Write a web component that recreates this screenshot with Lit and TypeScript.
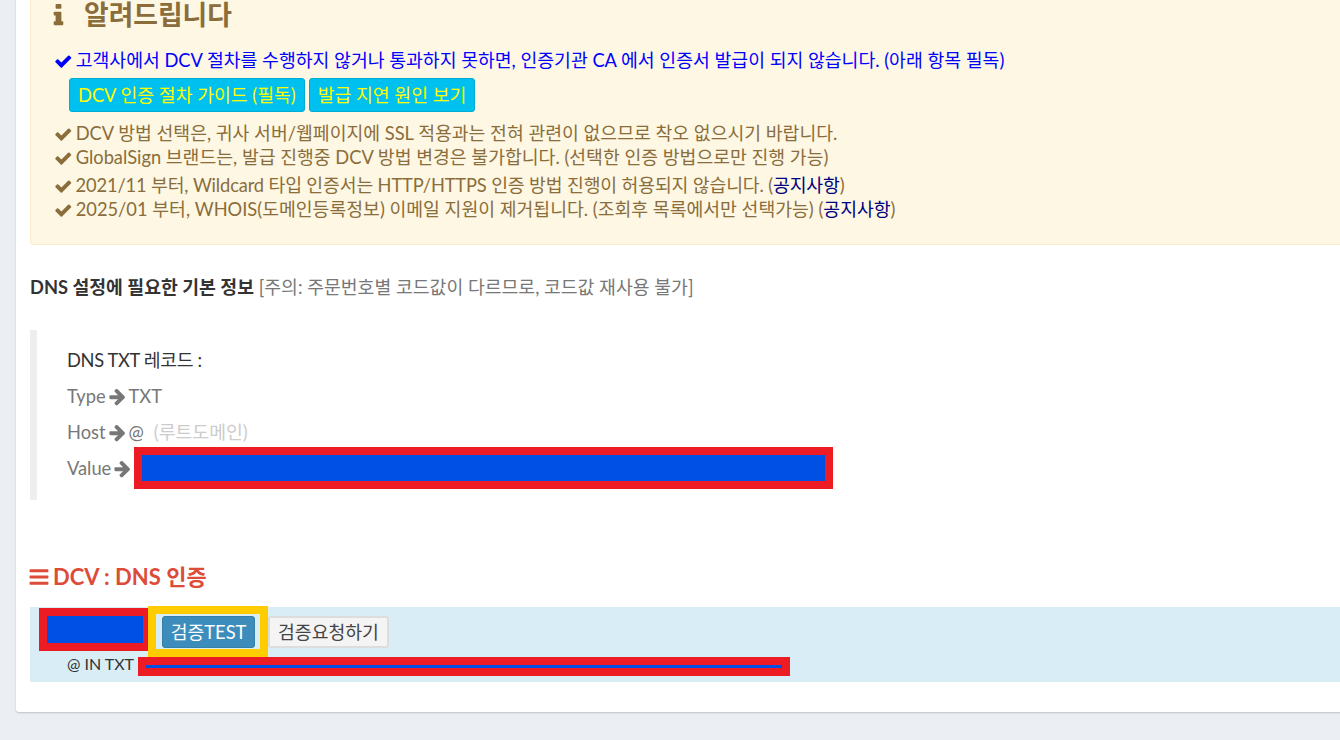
import { LitElement, html, css, svg } from "lit";
import { customElement } from "lit/decorators.js";

const CHECK = svg`<path d="M1671 566q0 40-28 68l-724 724-136 136q-28 28-68 28t-68-28l-136-136-362-362q-28-28-28-68t28-68l136-136q28-28 68-28t68 28l294 295 656-657q28-28 68-28t68 28l136 136q28 28 28 68z"/>`;
const INFO = svg`<path d="M1216 1344v128q0 26-19 45t-45 19h-512q-26 0-45-19t-19-45v-128q0-26 19-45t45-19h64v-384h-64q-26 0-45-19t-19-45v-128q0-26 19-45t45-19h384q26 0 45 19t19 45v576h64q26 0 45 19t19 45zm-128-1152v192q0 26-19 45t-45 19h-256q-26 0-45-19t-19-45v-192q0-26 19-45t45-19h256q26 0 45 19t19 45z"/>`;
const ARROW = svg`<path d="M1600 960q0 54-37 91l-651 651q-39 37-91 37-51 0-90-37l-75-75q-38-38-38-91t38-91l293-293h-704q-52 0-84.500-37.500t-32.500-90.500v-128q0-53 32.500-90.500t84.500-37.500h704l-293-294q-38-36-38-90t38-90l75-75q38-38 90-38 53 0 91 38l651 651q37 35 37 90z"/>`;
const BARS = svg`<path d="M1664 1344v128q0 26-19 45t-45 19h-1408q-26 0-45-19t-19-45v-128q0-26 19-45t45-19h1408q26 0 45 19t19 45zm0-512v128q0 26-19 45t-45 19h-1408q-26 0-45-19t-19-45v-128q0-26 19-45t45-19h1408q26 0 45 19t19 45zm0-512v128q0 26-19 45t-45 19h-1408q-26 0-45-19t-19-45v-128q0-26 19-45t45-19h1408q26 0 45 19t19 45z"/>`;

const icon = (p: unknown) =>
  html`<svg class="ico" viewBox="0 0 1792 1792" fill="currentColor" aria-hidden="true">${p}</svg>`;

@customElement("app-root")
export class AppRoot extends LitElement {
  static styles = css`
    :host {
      display: block;
      height: 740px;
      overflow: hidden;
      background: #ebeff4;
      font-family: Lato, "Noto Sans CJK KR", sans-serif;
      font-size: 18.3px;
      line-height: 24px;
      color: #333;
    }
    .card {
      margin: -20px -40px 0 16px;
      height: 732px;
      box-sizing: border-box;
      padding: 0 0 0 14px;
      background: #fff;
      border-radius: 3px;
      box-shadow: 0 1px 2px rgba(0, 0, 0, 0.2);
    }
    .ico {
      width: 18.5px;
      height: 18.5px;
      margin-right: -1.5px;
      flex: none;
      vertical-align: -3px;
    }
    .callout {
      height: 265px;
      box-sizing: border-box;
      padding: 15px 0 0 23px;
      background: #fdf7e3;
      border: 1px solid #faebcc;
      border-radius: 3px;
      color: #8a6d3b;
      white-space: nowrap;
    }
    .callout h4 {
      margin: 0 0 14px;
      font-size: 26.8px;
      line-height: 38px;
      font-weight: 700;
      display: flex;
      align-items: center;
    }
    .callout h4 .ico {
      width: 27px;
      height: 27px;
      margin: 0 11.6px 0 -8.6px;
    }
    .line {
      height: 24px;
    }
    .line.tall {
      height: 28px;
    }
    .line.tight {
      letter-spacing: -0.14px;
    }
    .blue {
      color: #0000ff;
    }
    .navy {
      color: #000080;
    }
    .guide {
      display: flex;
      gap: 4px;
      margin: 6px 0 9px 15px;
    }
    .guide span {
      height: 34px;
      box-sizing: border-box;
      padding: 0 8px;
      display: flex;
      align-items: center;
      background: #00c0ef;
      border: 1px solid #00acd6;
      border-radius: 3px;
      color: #ffff00;
    }
    .dns-title {
      margin: 30px 0 0;
      white-space: nowrap;
    }
    .dns-title b {
      color: #333;
    }
    .dns-title span {
      color: #777;
    }
    .quote {
      margin-top: 31px;
      height: 170px;
      box-sizing: border-box;
      border-left: 7px solid #eee;
      padding: 11px 0 0 30px;
      color: #777;
    }
    .row {
      height: 36px;
      display: flex;
      align-items: center;
      white-space: pre;
    }
    .row.head {
      height: 37px;
      color: #333;
      letter-spacing: -0.35px;
    }
    .row .ico {
      width: 19px;
      height: 19px;
      margin: 0 2px 0 2px;
    }
    .pale {
      color: #ccc;
      margin-left: 10px;
    }
    .mask {
      box-sizing: border-box;
      background: #0050e6;
      border: 8px solid #ed1c24;
      flex: none;
    }
    .mask.value {
      width: 699px;
      height: 42px;
    }
    .section {
      margin: 62px 0 15px;
      font-size: 22px;
      line-height: 30px;
      font-weight: 700;
      color: #dd4b39;
      display: flex;
      align-items: center;
    }
    .section .ico {
      width: 22px;
      height: 22px;
      margin: 0 3px 0 -2px;
    }
    .verify {
      height: 75px;
      background: #d9edf7;
      box-sizing: border-box;
      padding: 1px 0 0 9px;
    }
    .top {
      display: flex;
      height: 49px;
    }
    .mask.order {
      width: 112px;
      height: 43px;
      margin-right: -3px;
    }
    .outline {
      box-sizing: border-box;
      width: 120px;
      height: 51px;
      margin-top: -2px;
      border: 8px solid #ffcc00;
      padding: 2px 0 0 6px;
      position: relative;
    }
    .btn {
      box-sizing: border-box;
      height: 32px;
      display: flex;
      align-items: center;
      justify-content: center;
      border-radius: 3px;
      border: 1px solid;
    }
    .btn.test {
      width: 93px;
      background: #3c8dbc;
      border-color: #367fa9;
      color: #fff;
    }
    .btn.req {
      width: 121px;
      margin-top: 8px;
      background: #f4f4f4;
      border: 2px solid #ddd;
      color: #444;
    }
    .bottom {
      display: flex;
      height: 19px;
      padding-left: 28px;
      font-size: 16px;
      line-height: 14px;
    }
    .mask.txt {
      width: 652px;
      height: 19px;
      margin-left: 4px;
    }
  `;

  protected render() {
    return html`
      <div class="card">
        <div class="callout">
          <h4>${icon(INFO)}알려드립니다</h4>
          <div class="line blue">
            ${icon(CHECK)} 고객사에서 DCV 절차를 수행하지 않거나 통과하지 못하면, 인증기관 CA 에서 인증서 발급이 되지 않습니다. (아래 항목 필독)
          </div>
          <div class="guide">
            <span>DCV 인증 절차 가이드 (필독)</span>
            <span>발급 지연 원인 보기</span>
          </div>
          <div class="line">${icon(CHECK)} DCV 방법 선택은, 귀사 서버/웹페이지에 SSL 적용과는 전혀 관련이 없으므로 착오 없으시기 바랍니다.</div>
          <div class="line tall">${icon(CHECK)} GlobalSign 브랜드는, 발급 진행중 DCV 방법 변경은 불가합니다. (선택한 인증 방법으로만 진행 가능)</div>
          <div class="line tight">${icon(CHECK)} 2021/11 부터, Wildcard 타입 인증서는 HTTP/HTTPS 인증 방법 진행이 허용되지 않습니다. (<span class="navy">공지사항</span>)</div>
          <div class="line">${icon(CHECK)} 2025/01 부터, WHOIS(도메인등록정보) 이메일 지원이 제거됩니다. (조회후 목록에서만 선택가능) (<span class="navy">공지사항</span>)</div>
        </div>
        <p class="dns-title"><b>DNS 설정에 필요한 기본 정보</b> <span>[주의: 주문번호별 코드값이 다르므로, 코드값 재사용 불가]</span></p>
        <div class="quote">
          <div class="row head">DNS TXT 레코드 :</div>
          <div class="row">Type${icon(ARROW)}TXT</div>
          <div class="row">Host${icon(ARROW)}@<span class="pale">(루트도메인)</span></div>
          <div class="row">Value${icon(ARROW)}<div class="mask value"></div></div>
        </div>
        <div class="section">${icon(BARS)}DCV : DNS 인증</div>
        <div class="verify">
          <div class="top">
            <div class="mask order"></div>
            <div class="outline"><div class="btn test">검증TEST</div></div>
            <div class="btn req">검증요청하기</div>
          </div>
          <div class="bottom">@ IN TXT<div class="mask txt"></div></div>
        </div>
      </div>
    `;
  }
}
